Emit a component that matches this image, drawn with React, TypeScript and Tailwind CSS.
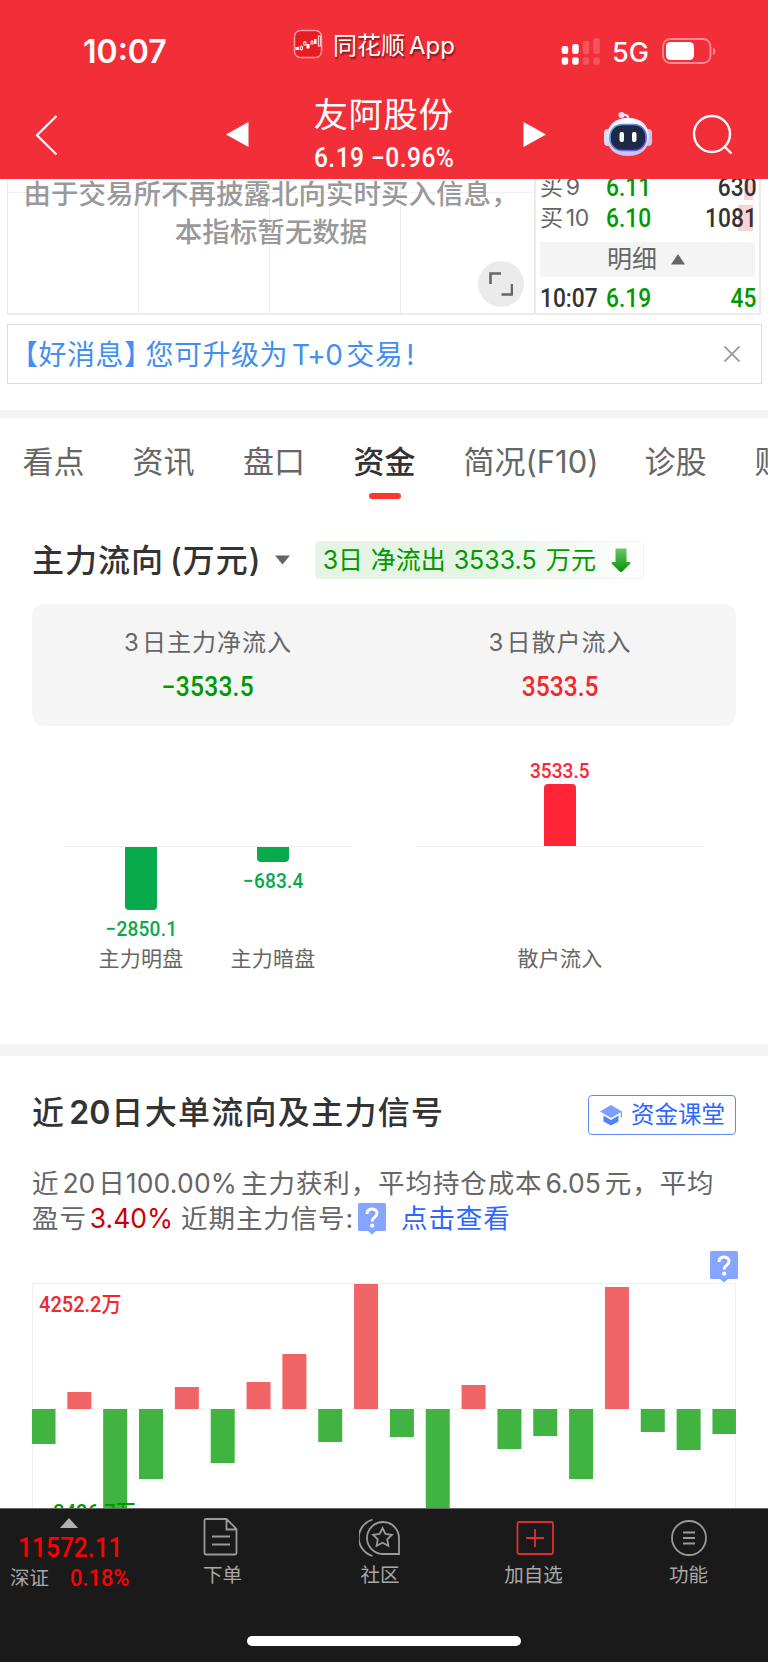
import React from 'react';

interface NumProps {
  children: React.ReactNode;
  className?: string;
}

// Narrow DIN-like figures used for all quotes and amounts
const Num: React.FC<NumProps> = ({ children, className = '' }) => (
  <span
    className={`inline-block scale-x-[0.91] whitespace-nowrap font-['Roboto','Noto_Sans_CJK_SC',sans-serif] font-medium ${className}`}
  >
    {children}
  </span>
);

const QuestionTag: React.FC<{ className?: string }> = ({ className = '' }) => (
  <svg width="28" height="32" viewBox="0 0 28 32" className={className}>
    <path d="M1.5 0h25a1.5 1.5 0 0 1 1.5 1.5v25a1.5 1.5 0 0 1-1.5 1.5H18l-4 3.500L10 28H1.500A1.500 1.500 0 0 1 0 26.500v-25A1.500 1.500 0 0 1 1.500 0z" fill="#87a4ff" />
    <path d="M9 11c0-3.200 2-5 5-5s5 1.800 5 4.500c0 3.700-4.800 3.800-4.800 8" fill="none" stroke="#fff" strokeWidth="3" />
    <circle cx="14.200" cy="22.700" r="2.100" fill="#fff" />
  </svg>
);

const StatusBar = () => (
  <div className="flex h-[88px] text-white">
    <div className="w-[293px] pt-[32px] pl-[83px] text-[32px] leading-[40px] font-semibold">10:07</div>
    <svg width="30" height="30" viewBox="0 0 30 30" className="mt-[29px]">
      <rect x="1.500" y="1.500" width="27" height="27" rx="6" fill="#e81d24" stroke="#ff9a9c" strokeWidth="1.500" />
      <path d="M2.500 18h3.500v3h-3.500zM13.500 15h3v4.500h-3zM21 10h2.500v5H21z" fill="#fff" />
      <path d="M8.300 16.500v5M12 12v4M19 11v4" stroke="#fff" strokeWidth="1" />
      <rect x="7.200" y="17.800" width="2.400" height="2.600" fill="#e81d24" stroke="#fff" strokeWidth="0.900" />
      <rect x="10.800" y="13" width="2.200" height="3" fill="#e81d24" stroke="#fff" strokeWidth="0.900" />
      <rect x="18" y="12.500" width="2" height="2.500" fill="#e81d24" stroke="#fff" strokeWidth="0.900" />
      <rect x="25.300" y="7" width="2" height="10" fill="#e81d24" stroke="#fff" strokeWidth="0.900" />
    </svg>
    <div className="ml-[10px] w-[228px] pt-[30px] text-[24px] leading-[32px] whitespace-nowrap [text-shadow:1px_2px_2px_rgba(80,0,0,0.7)]">
      同花顺<span className="ml-[4px]">App</span>
    </div>
    <svg width="39" height="27" viewBox="0 0 39 27" className="mt-[38px]">
      <g fill="#fff">
        <rect x="0.700" y="8" width="6.500" height="8" rx="2.200" />
        <rect x="11.200" y="6" width="6.500" height="10" rx="2.200" />
        <rect x="0.700" y="19.300" width="6.500" height="7.500" rx="2.200" />
        <rect x="11.200" y="19.300" width="6.500" height="7.500" rx="2.200" />
      </g>
      <g fill="#f4555d">
        <rect x="21.800" y="3" width="6.500" height="13" rx="2.200" />
        <rect x="32.300" y="0" width="6.500" height="16" rx="2.200" />
        <rect x="21.800" y="19.300" width="6.500" height="7.500" rx="2.200" />
        <rect x="32.300" y="19.300" width="6.500" height="7.500" rx="2.200" />
      </g>
    </svg>
    <div className="ml-[12px] w-[50px] pt-[37px] text-[27px] leading-[32px] font-medium">5G</div>
    <svg width="56" height="26" viewBox="0 0 56 26" className="mt-[38px]">
      <rect x="1" y="1" width="47.500" height="24" rx="7.500" fill="none" stroke="#f98d92" strokeWidth="1.800" />
      <rect x="4" y="4" width="28" height="18" rx="4.500" fill="#fff" />
      <path d="M51 9.500c3 1.200 3 6.300 0 7.500z" fill="#f98d92" />
    </svg>
  </div>
);

const Robot = () => (
  <svg width="50" height="46" viewBox="0 0 50 46">
    <defs>
      <linearGradient id="shell" x1="0" y1="0" x2="0" y2="1">
        <stop offset="0" stopColor="#fff" />
        <stop offset="1" stopColor="#c3c2e8" />
      </linearGradient>
      <linearGradient id="rim" x1="0" y1="0" x2="1" y2="1">
        <stop offset="0" stopColor="#59b6d8" />
        <stop offset="1" stopColor="#7a3ff0" />
      </linearGradient>
    </defs>
    <path d="M18.500 4.500c4-1.500 7-.500 7 4" fill="none" stroke="#e9e6fb" strokeWidth="2.200" />
    <circle cx="18.500" cy="4" r="3" fill="#e4e0fa" />
    <rect x="1" y="18" width="8" height="17" rx="4" fill="#dcdaf3" />
    <rect x="41" y="18" width="8" height="17" rx="4" fill="#c9c7ec" />
    <path d="M25 7c13 0 21 7 21 19s-8 19-21 19S4 38 4 26 12 7 25 7z" fill="url(#shell)" />
    <rect x="7" y="13.500" width="36" height="26" rx="12" fill="#1d2947" stroke="url(#rim)" strokeWidth="1.600" />
    <rect x="16.500" y="21" width="4.500" height="10" rx="2" fill="#fff" />
    <rect x="29" y="21" width="4.500" height="10" rx="2" fill="#fff" />
  </svg>
);

const NavBar = () => (
  <div className="flex h-[91px] text-white">
    <svg width="24" height="42" viewBox="0 0 24 42" className="mt-[26px] ml-[34px]" fill="none" stroke="#fff" strokeWidth="2.200">
      <path d="M22.500 2L3 21.300 22.500 40.500" />
    </svg>
    <svg width="23" height="26" viewBox="0 0 23 26" className="mt-[33.500px] ml-[167.500px]">
      <path d="M22.500 0v25L0 12.500z" fill="#fff" />
    </svg>
    <div className="ml-[63px] w-[144px] text-center whitespace-nowrap">
      <div className="h-[56px] text-[34.500px] leading-[54px] tracking-[0.5px]">友阿股份</div>
      <Num className="-mr-3.5 -ml-3 text-[27px] leading-[28px] tracking-[0.5px]">6.19 −0.96%</Num>
    </div>
    <svg width="23" height="26" viewBox="0 0 23 26" className="mt-[33.500px] ml-[67px]">
      <path d="M.500 0v25L23 12.500z" fill="#fff" />
    </svg>
    <div className="mt-[23px] ml-[57px]">
      <Robot />
    </div>
    <svg width="42" height="42" viewBox="0 0 42 42" className="mt-[26px] ml-[39px]" fill="none" stroke="#fff" strokeWidth="2.400">
      <circle cx="20" cy="20" r="18" />
      <path d="M32 32l7.500 7.500" />
    </svg>
  </div>
);

interface BidRowProps {
  level: string;
  price: string;
  qty: string;
  hot: string;
  className?: string;
}

const BidRow: React.FC<BidRowProps> = ({ level, price, qty, hot, className = '' }) => (
  <div className={`relative flex h-[31px] w-[217px] items-center text-[23px] text-[#666] ${className}`}>
    <div className={`absolute top-[2px] right-[4px] h-[26px] bg-[#fbd3d5] ${hot}`} />
    <div className="w-[66px] tracking-[-0.3px]">
      买<span className="ml-[3px]">{level}</span>
    </div>
    <Num className="relative origin-left text-[25px] text-[#090]">{price}</Num>
    <Num className="relative ml-auto origin-right text-[25px] text-[#333]">{qty}</Num>
  </div>
);

const Market = () => (
  <div className="flex h-[145px] overflow-hidden pl-[7px]">
    <div className="relative h-[136px] w-[527px] border-b-2 border-l border-[#ebebeb]">
      <div className="flex h-[134px]">
        <div className="w-[131px] border-r border-[#ececec]" />
        <div className="w-[131px] border-r border-[#ececec]" />
        <div className="w-[131px] border-r border-[#ececec]" />
      </div>
      <div className="absolute top-[13px] left-0 h-px w-full bg-[#f0f0f0]" />
      <div className="absolute top-[-4.500px] left-0 w-full text-center text-[27.5px] leading-[38px] font-medium whitespace-nowrap text-[#999]">
        由于交易所不再披露北向实时买入信息，
        <br />
        本指标暂无数据
      </div>
      <div className="absolute top-[82px] right-[10px] flex h-[46px] w-[46px] items-center justify-center rounded-full bg-[#ebebeb]">
        <svg width="24" height="24" viewBox="0 0 24 24" fill="none" stroke="#666" strokeWidth="2.600">
          <path d="M1.500 12V1.500H12M12.500 22.500H23V12" />
        </svg>
      </div>
    </div>
    <div className="h-[136px] w-[227px] border-x-2 border-b-2 border-[#ebebeb] pl-[4px]">
      <BidRow level="9" price="6.11" qty="630" hot="w-[9px]" className="mt-[-7px]" />
      <BidRow level="10" price="6.10" qty="1081" hot="w-[15px]" />
      <div className="mt-[8px] flex h-[35px] w-[215px] items-center bg-[#f4f4f4] pb-[2px] pl-[67px] text-[25px] text-[#666]">
        明细
        <svg width="14" height="11" viewBox="0 0 14 11" className="mt-[2px] ml-[14px]">
          <path d="M7 0l7 10.500H0z" fill="#666" />
        </svg>
      </div>
      <div className="flex h-[36px] w-[216px] items-center pt-[8px] text-[25px] text-[#333]">
        <Num className="w-[66px] origin-left">10:07</Num>
        <Num className="origin-left text-[#090]">6.19</Num>
        <Num className="ml-auto origin-right text-[#090]">45</Num>
      </div>
    </div>
  </div>
);

const Notice = () => (
  <div className="ml-[7px] flex h-[60px] w-[755px] items-center border border-[#dcdcdc] text-[28px] tracking-[0.5px] whitespace-nowrap text-[#418ff0]">
    <div className="flex pt-[3px]">
      <span className="ml-[2px]">【好消息】</span>
      <span className="-ml-[7px]">您可升级为</span>
      <span className="ml-[4px] tracking-[-0.7px]">T+0</span>
      <span className="ml-[4px]">交易</span>
      <span className="ml-[3px]">!</span>
    </div>
    <svg width="16" height="16" viewBox="0 0 16 16" className="mr-[21px] ml-auto" stroke="#999" strokeWidth="1.800">
      <path d="M.500.500l15 15M15.500.500l-15 15" />
    </svg>
  </div>
);

const tabs = [
  { label: '看点', width: 'w-[110px]' },
  { label: '资讯', width: 'w-[110.500px]' },
  { label: '盘口', width: 'w-[110.500px]' },
  { label: '资金', width: 'w-[110px]', active: true },
  { label: '简况(F10)', width: 'w-[181px]' },
  { label: '诊股', width: 'w-[110px]' },
  { label: '财务', width: 'w-[110px]' },
];

const Tabs = () => (
  <div className="flex h-[106px] overflow-hidden pl-[22.500px] text-[31px] leading-[40px] whitespace-nowrap text-[#666]">
    {tabs.map((t) => (
      <div key={t.label} className={`shrink-0 pt-[24px] ${t.width}`}>
        <div className={t.active ? 'font-medium text-[#333]' : ''}>{t.label}</div>
        {t.active && <div className="mt-[10.500px] ml-[15px] h-[6px] w-[32px] rounded-full bg-[#fc372f]" />}
      </div>
    ))}
  </div>
);

const FlowBars = () => (
  <div className="flex h-[318px] pt-[33px] pl-[63px] text-[21px] text-[#666]">
    <div className="relative flex h-[240px] w-[290px]">
      <div className="absolute top-[87px] h-px w-full bg-[#f0f0f0]" />
      <div className="ml-[12px] flex w-[132px] flex-col items-center">
        <div className="mt-[87px] h-[64px] w-[32px] rounded-b-[4px] bg-[#08aa4b]" />
        <Num className="mt-[7px] leading-[25px] tracking-[0.2px] text-[#08aa4b]">−2850.1</Num>
        <div className="mt-[2px] leading-[30px] tracking-[0.3px]">主力明盘</div>
      </div>
      <div className="flex w-[132px] flex-col items-center">
        <div className="mt-[87px] h-[16px] w-[32px] rounded-b-[4px] bg-[#08aa4b]" />
        <Num className="mt-[7px] leading-[25px] tracking-[0.2px] text-[#08aa4b]">−683.4</Num>
        <div className="mt-[50px] leading-[30px] tracking-[0.3px]">主力暗盘</div>
      </div>
    </div>
    <div className="relative ml-[62px] flex h-[240px] w-[290px] flex-col items-center">
      <div className="absolute top-[87px] h-px w-full bg-[#f0f0f0]" />
      <Num className="leading-[25px] text-[#ff2436]">3533.5</Num>
      <div className="h-[63px] w-[32px] rounded-t-[4px] bg-[#ff2436]" />
      <div className="mt-[97px] leading-[30px] tracking-[0.3px]">散户流入</div>
    </div>
  </div>
);

const MainFlow = () => (
  <section className="h-[520px]">
    <div className="flex h-[80px] items-center pb-[8px] pl-[32px]">
      <h2 className="pt-px text-[32px] leading-[40px] font-medium tracking-[1px] whitespace-nowrap text-[#333]">
        主力流向<span className="ml-[6px]">(万元)</span>
      </h2>
      <svg width="15" height="10" viewBox="0 0 15 10" className="ml-[13px] shrink-0">
        <path d="M0 .500h15L7.500 9.500z" fill="#666" />
      </svg>
      <div className="ml-[25px] flex h-[38px] w-[329px] items-center rounded-[4px] border border-[#e9f6e9] bg-linear-to-r from-[#e5f4e5] from-50% to-white pl-[7px] text-[25px] whitespace-nowrap text-[#090]">
        <span className="w-[48px]">3日</span>
        <span className="w-[83px]">净流出</span>
        <span className="w-[92px]">3533.5</span>
        <span className="w-[65px] tracking-[0.3px]">万元</span>
        <svg width="20" height="25" viewBox="0 0 20 25">
          <defs>
            <linearGradient id="down" x1="0" y1="0" x2="0" y2="1">
              <stop offset="0" stopColor="#6cc46c" />
              <stop offset="1" stopColor="#090" />
            </linearGradient>
          </defs>
          <path d="M5.500.500h9a1 1 0 0 1 1 1V14h3.500l.500 1.500L10.800 24h-1.600L.500 15.500 1 14h3.500V1.500a1 1 0 0 1 1-1z" fill="url(#down)" />
        </svg>
      </div>
    </div>
    <div className="mx-[32px] flex h-[122px] rounded-xl bg-[#f5f5f5] text-center text-[24px] text-[#666]">
      <div className="w-1/2 pt-[23px]">
        <div className="h-[44px] leading-[32px] tracking-[1px]">
          <span className="mr-[2px]">3</span>日主力净流入
        </div>
        <Num className="text-[27px] leading-[32px] tracking-[0.3px] text-[#090]">−3533.5</Num>
      </div>
      <div className="w-1/2 pt-[23px]">
        <div className="h-[44px] leading-[32px] tracking-[1px]">
          <span className="mr-[2px]">3</span>日散户流入
        </div>
        <Num className="text-[27px] leading-[32px] text-[#f0292f]">3533.5</Num>
      </div>
    </div>
    <FlowBars />
  </section>
);

// Bar heights in px, positive above the axis
const flow = [-35, 17, -120, -70, 22, -54, 27, 55, -33, 125, -28, -120, 24, -40, -27, -70, 122, -23, -41, -25];

const FlowChart = () => (
  <div className="relative mx-[32px] h-[225px] border border-b-0 border-[#f0f0f0]">
    <svg width="704" height="225" viewBox="0 0 704 225" className="-ml-px">
      <path d="M0 125h704" stroke="#f2f2f2" />
      {flow.map((v, i) => (
        <rect
          key={i}
          x={i === 0 ? 0 : i * 35.84 - 0.5}
          y={v > 0 ? 125 - v : 125}
          width={i === 0 || i === 19 ? 23.5 : 24}
          height={Math.abs(v)}
          fill={v > 0 ? '#f16466' : '#41b341'}
        />
      ))}
    </svg>
    <Num className="absolute top-[7px] left-[6px] origin-left text-[22px] leading-[28px] text-[#f0292f]">4252.2万</Num>
    <Num className="absolute top-[215px] left-[9px] origin-left text-[22px] leading-[28px] text-[#090]">−3426.7万</Num>
    <QuestionTag className="absolute top-[-33px] right-[-3px]" />
  </div>
);

const BigOrders = () => (
  <section className="h-[452px] overflow-hidden">
    <div className="flex h-[110px] items-center pt-[4px] pl-[32px]">
      <h2 className="text-[32px] leading-[40px] font-medium tracking-[1.3px] whitespace-nowrap text-[#333]">
        近<span className="mr-px ml-[4px] font-semibold tracking-[0px]">20</span>日大单流向及主力信号
      </h2>
      <div className="mt-[4px] mr-[32px] ml-auto flex h-[40px] w-[148px] items-center rounded-[4px] border border-[#5e89ff] pl-[11px] text-[23.5px] whitespace-nowrap text-[#2f66ff]">
        <svg width="23" height="21" viewBox="0 0 23 21" className="mr-[8px] shrink-0">
          <path d="M11 0l11 6.500-11 6.500L0 6.500z" fill="#7ba0ff" />
          <path d="M3.500 10.500L11 15l7.500-4.500v6L11 20.500l-7.500-4z" fill="#4f82fa" />
          <path d="M21.300 6.500v6" stroke="#7ba0ff" strokeWidth="1.300" />
        </svg>
        资金课堂
      </div>
    </div>
    <div className="h-[117px] pl-[32px] text-[26.5px] leading-[35px] tracking-[0.9px] whitespace-nowrap text-[#666]">
      <div>
        近<span className="mr-[3px] ml-[3px] tracking-[0px]">20</span>日
        <span className="mr-[4px] tracking-[0.2px]">100.00%</span>主力获利，平均持仓成本
        <span className="mr-[4px] ml-[3px] tracking-[0px]">6.05</span>元，平均
      </div>
      <div className="flex">
        盈亏<span className="ml-[3px] tracking-[0px] text-[#c00]">3.40%</span>
        <span className="ml-[8px]">近期主力信号:</span>
        <QuestionTag className="mt-[1.500px] ml-[4px]" />
        <span className="ml-[15px] text-[#2f66ff]">点击查看</span>
      </div>
    </div>
    <FlowChart />
  </section>
);

interface DockItemProps {
  label: string;
  className: string;
  children: React.ReactNode;
}

const DockItem: React.FC<DockItemProps> = ({ label, className, children }) => (
  <div className={`flex flex-col items-center pt-[7.500px] ${className}`}>
    <svg width="42" height="42" viewBox="0 0 42 42" fill="none" stroke="#9a9a9a" strokeWidth="1.800">
      {children}
    </svg>
    <div className="mt-[3.500px] text-[19.5px] leading-[26px] whitespace-nowrap">{label}</div>
  </div>
);

const Dock = () => (
  <footer className="h-[154px] border-t border-[#666] bg-[#1a1a1a] text-[#a8a8a8]">
    <div className="flex h-[127px]">
      <div className="w-[143px] text-[#f00]">
        <svg width="18" height="10" viewBox="0 0 18 10" className="mt-[9px] ml-[60px]">
          <path d="M9 0l9 10H0z" fill="#b0b0b0" />
        </svg>
        <Num className="mt-[6px] ml-[18px] origin-left text-[27px] leading-[28px]">11572.11</Num>
        <div className="mt-[2px] flex items-center pl-[10px] text-[19.5px] leading-[28px]">
          <span className="w-[60px] text-[#a8a8a8]">深证</span>
          <Num className="origin-left text-[24px]">0.18%</Num>
        </div>
      </div>
      <DockItem label="下单" className="w-[159px]">
        <path d="M3.500 2h21l10 10v24a1.500 1.500 0 0 1-1.500 1.500H4A1.500 1.500 0 0 1 2.500 36V3.500A1.500 1.500 0 0 1 4 2zM24.500 2v10.500h10M10 19.500h18M10 27.500h18" />
      </DockItem>
      <DockItem label="社区" className="w-[156px]">
        <path d="M40 21.500v15.500H23.500A16 16 0 1 1 40 21.500z" />
        <path d="M13.500 2.500a19 19 0 0 0 0 36.500" />
        <path d="M23.500 11l2.900 6 6.500.900-4.700 4.500 1.200 6.500-5.900-3.100-5.900 3.100 1.200-6.500-4.700-4.500 6.500-.900z" />
      </DockItem>
      <DockItem label="加自选" className="w-[151px]">
        <g stroke="#e02f30">
          <rect x="4.500" y="5" width="35.500" height="32" rx="1.500" />
          <path d="M22 12v18M13 21h18" />
        </g>
      </DockItem>
      <DockItem label="功能" className="w-[159px]">
        <circle cx="21" cy="21" r="17" />
        <path d="M15 15.500h12M15 21h12M15 26.500h12" />
      </DockItem>
    </div>
    <div className="mx-auto h-[10px] w-[274px] rounded-full bg-white" />
  </footer>
);

export default function App() {
  return (
    <div className="h-[1663px] w-[768px] overflow-hidden bg-white font-['Inter','Noto_Sans_CJK_SC',sans-serif] leading-[1.2]">
      <header className="bg-[#f22f38]">
        <StatusBar />
        <NavBar />
      </header>
      <Market />
      <Notice />
      <div className="mt-[26px] h-[8px] bg-[#f4f4f4]" />
      <Tabs />
      <MainFlow />
      <div className="h-[12px] bg-[#f4f4f4]" />
      <BigOrders />
      <Dock />
    </div>
  );
}
